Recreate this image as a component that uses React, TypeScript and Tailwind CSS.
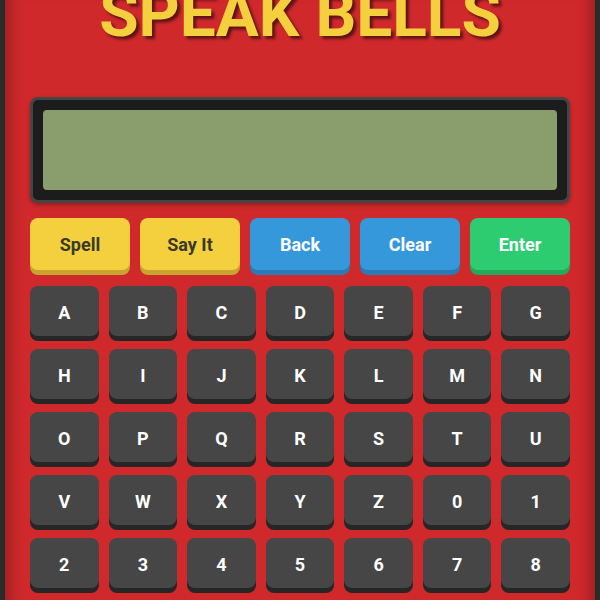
const ACTIONS = [
  { label: 'Spell', cls: 'bg-[#f4d03f] text-[#3a3a2a] shadow-[0_5px_0_#c7a52e]' },
  { label: 'Say It', cls: 'bg-[#f4d03f] text-[#3a3a2a] shadow-[0_5px_0_#c7a52e]' },
  { label: 'Back', cls: 'bg-[#3498db] text-white shadow-[0_5px_0_#2a7bb3]' },
  { label: 'Clear', cls: 'bg-[#3498db] text-white shadow-[0_5px_0_#2a7bb3]' },
  { label: 'Enter', cls: 'bg-[#2ecc71] text-white shadow-[0_5px_0_#25a85c]' },
]

const KEYS = 'ABCDEFGHIJKLMNOPQRSTUVWXYZ0123456789'.split('')

export default function App() {
  return (
    <div className="h-screen overflow-hidden bg-[#2b2b2b] px-[5px] font-['Roboto',sans-serif]">
      <div className="min-h-full bg-[#d0292c] px-[25px] pb-10 shadow-[inset_0_0_18px_rgba(0,0,0,0.45)]">
        <h1 className="-mt-[17px] mb-[50px] text-center text-[64px] font-bold leading-none text-[#f4d03f] [text-shadow:3px_3px_3px_rgba(0,0,0,0.55)]">
          SPEAK BELLS
        </h1>

        <div className="h-[106px] rounded-lg border-[3px] border-[#454545] bg-[#1c1c1c] p-[10px] shadow-[0_2px_4px_rgba(0,0,0,0.3)]">
          <div className="h-full rounded-[4px] bg-[#8a9e6d]" />
        </div>

        <div className="mt-[15px] grid grid-cols-5 gap-[10px]">
          {ACTIONS.map((a) => (
            <button
              key={a.label}
              type="button"
              className={`flex h-[52px] items-center justify-center rounded-lg pt-[1px] text-lg font-bold ${a.cls}`}
            >
              {a.label}
            </button>
          ))}
        </div>

        <div className="mt-[16px] grid grid-cols-7 gap-x-[10px] gap-y-[13px]">
          {KEYS.map((k) => (
            <button
              key={k}
              type="button"
              className="flex h-[50px] items-center justify-center rounded-lg bg-[#464646] pt-[3px] text-lg font-bold text-white shadow-[0_5px_0_#262626]"
            >
              {k}
            </button>
          ))}
        </div>
      </div>
    </div>
  )
}
